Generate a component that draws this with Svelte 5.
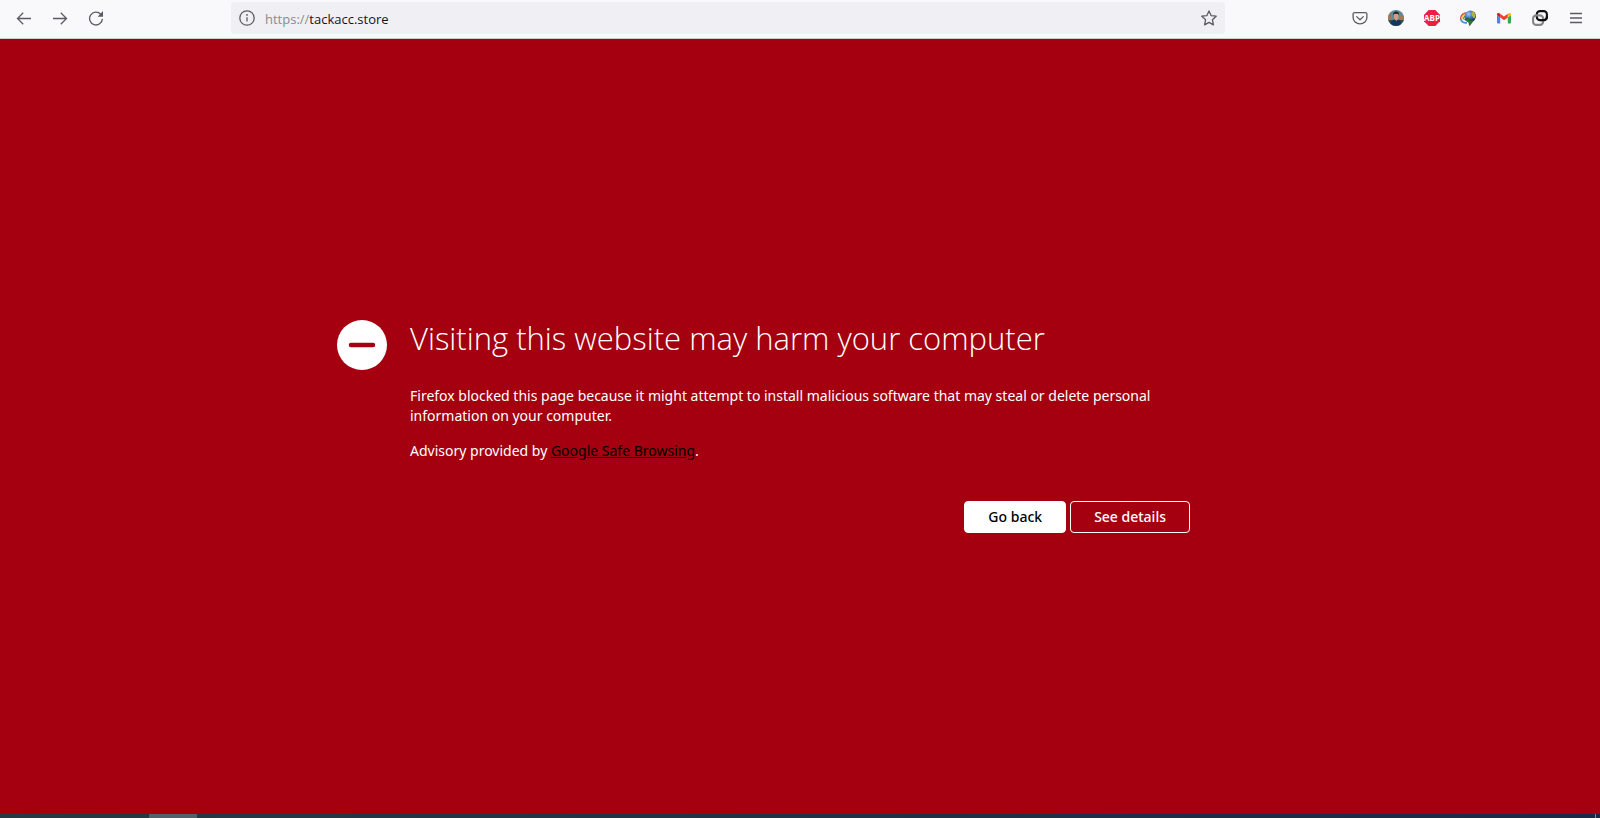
<script>
  let address = $state('https://tackacc.store');
  const scheme = $derived(address.slice(0, address.indexOf('//') + 2));
  const host = $derived(address.slice(scheme.length));
</script>

<div class="window">
  <header class="toolbar">
    <nav class="tools" aria-label="Navigation">
      <button class="tool" aria-label="Back">
        <svg viewBox="0 0 16 16" class="line"><path d="M15 8.500H1.500M7.200 2.800 1.500 8.500l5.700 5.700" /></svg>
      </button>
      <button class="tool" aria-label="Forward">
        <svg viewBox="0 0 16 16" class="line"><path d="M1 8.500h13.500M8.800 2.800l5.700 5.700-5.700 5.700" /></svg>
      </button>
      <button class="tool" aria-label="Reload">
        <svg viewBox="0 0 16 16" class="line">
          <path d="M12.700 4.200A6.400 6.400 0 1 0 14.400 8.900" />
          <path d="M15 1v5.200a.5.5 0 0 1-.5.5H9.600z" fill="#5b5b66" stroke="none" />
        </svg>
      </button>
    </nav>

    <div class="address">
      <button class="site" aria-label="Site information">
        <svg viewBox="0 0 16 16" class="line">
          <circle cx="8" cy="8" r="7.200" />
          <path d="M8 7.200v4.200" />
          <circle cx="8" cy="4.900" r=".9" fill="#5b5b66" stroke="none" />
        </svg>
      </button>
      <a class="url" href={address}><span class="scheme">{scheme}</span>{host}</a>
      <button class="site" aria-label="Bookmark this page">
        <svg viewBox="0 0 16 16" class="line">
          <path d="M8 .9l2.100 4.700 5.100.6-3.800 3.500 1 5.200L8 12.400l-4.400 2.500 1-5.200L.8 6.200l5.100-.6z" stroke-linejoin="round" />
        </svg>
      </button>
    </div>

    <nav class="tools extensions" aria-label="Extensions">
      <button class="tool" aria-label="Save to Pocket">
        <svg viewBox="0 0 16 16" class="line">
          <path d="M2.600 2.600h10.800a1.500 1.500 0 0 1 1.500 1.500v3.400a6.900 6.400 0 0 1-13.800 0V4.100a1.500 1.500 0 0 1 1.500-1.500z" />
          <path d="M4.700 6.600 8 9.700l3.300-3.100" stroke-linecap="round" stroke-linejoin="round" />
        </svg>
      </button>
      <button class="tool" aria-label="Account">
        <svg viewBox="0 0 16 16">
          <defs><clipPath id="face"><circle cx="8" cy="8" r="8" /></clipPath></defs>
          <g clip-path="url(#face)">
            <path fill="#5f8b93" d="M0 0h16v16H0z" />
            <path fill="#a27854" d="M0 4h4v6H0zM12 6h4v5h-4z" />
            <path fill="#334f55" d="M0 10h5v3H0zM11 10h5v3h-5z" />
            <path fill="#17365a" d="M2 16c0-4 2-6 4.500-6.500h3c3 .5 4 3 4 6.500z" />
            <path fill="#d79c7d" d="M6 4h4.500v4.500L8.500 11 6 8.500z" />
            <path fill="#20262b" d="M5.300 5.500c-.5-3 1-4 3-4s3.200 1.500 2.500 4l-.8-1.800-3.900.3z" />
          </g>
        </svg>
      </button>
      <button class="tool" aria-label="Adblock Plus">
        <svg viewBox="0 0 16 16">
          <path fill="#ed1e45" d="M4.700 0h6.600L16 4.700v6.600L11.300 16H4.700L0 11.300V4.700z" />
          <text x="8" y="11" text-anchor="middle" class="abp">ABP</text>
        </svg>
      </button>
      <button class="tool" aria-label="Internet Download Manager">
        <svg viewBox="0 0 16 16">
          <defs>
            <radialGradient id="globe" cx=".35" cy=".3" r=".75">
              <stop offset="0" stop-color="#a9c9f2" />
              <stop offset=".45" stop-color="#4577c4" />
              <stop offset="1" stop-color="#142c62" />
            </radialGradient>
          </defs>
          <path fill="none" stroke="#e0483b" stroke-width="1.400" d="M8 2.800C3.500 2.800.7 5.200.7 9" />
          <path fill="none" stroke="#f0cf37" stroke-width="1.400" d="M8 4.100C4.500 4.100 2 6 2 9" />
          <path fill="none" stroke="#54b649" stroke-width="1.600" d="M8 5.500C5.500 5.400 3.400 7 3.400 9.500" />
          <path fill="none" stroke="#4b8cd2" stroke-width="1.700" d="M.7 9c.4 2.600 3.100 4.100 6.300 3.800" />
          <circle cx="10.300" cy="6.300" r="5.700" fill="url(#globe)" />
          <path fill="#b5b438" d="M11.500 1.500l2 .2 2 3-.3 3-1.700.6-1.700-3z" />
          <path fill="#20882c" stroke="#0d3315" stroke-width=".5" d="M4.500 9.500 7.500 8l2.500 2.500 4-.8-4.300 6-.9-3.200z" />
        </svg>
      </button>
      <button class="tool" aria-label="Gmail">
        <svg viewBox="0 0 16 16">
          <path fill="#4285f4" d="M1 5l3.200 2.400V13.500H2a1 1 0 0 1-1-1z" />
          <path fill="#34a853" d="M11.800 7.400 15 5v7.500a1 1 0 0 1-1 1h-2.200z" />
          <path fill="#ea4335" d="M4.200 3.700 8 6.600l3.800-2.900v3.700L8 10.300 4.200 7.400z" />
          <path fill="#c5221f" d="M1 4.300C1 2.600 2.700 2.500 4.200 3.700v3.700L1 5z" />
          <path fill="#fbbc04" d="M11.800 3.700C13.300 2.500 15 2.600 15 4.300V5l-3.200 2.400z" />
        </svg>
      </button>
      <button class="tool" aria-label="Link extension">
        <svg viewBox="0 0 16 16" fill="none" stroke-width="2.100">
          <rect x="4.800" y="1.100" width="10.100" height="9" rx="3.200" stroke="#111" />
          <rect x="1.100" y="5.400" width="10" height="9.500" rx="3.200" stroke="#858589" />
          <path stroke="#111" d="M14.900 6v.9a3.200 3.200 0 0 1-3.200 3.200H8.500" />
        </svg>
      </button>
      <button class="tool" aria-label="Application menu">
        <svg viewBox="0 0 16 16" class="line"><path d="M2 3.500h12M2 8h12M2 12.500h12" /></svg>
      </button>
    </nav>
  </header>

  <main>
    <section class="warning">
      <svg class="sign" viewBox="0 0 50 50" aria-hidden="true">
        <circle cx="25" cy="25" r="25" fill="#fff" />
        <path d="M14 25h22" stroke="#a4000f" stroke-width="4.500" stroke-linecap="round" />
      </svg>
      <div class="message">
        <h1>Visiting this website may harm your computer</h1>
        <p>Firefox blocked this page because it might attempt to install malicious software that may steal or delete personal information on your computer.</p>
        <p>Advisory provided by <a href="https://safebrowsing.google.com">Google Safe Browsing</a>.</p>
        <div class="actions">
          <button class="action primary">Go back</button>
          <button class="action">See details</button>
        </div>
      </div>
    </section>
  </main>

  <footer class="taskbar"><span class="task"></span><span class="desktop"></span></footer>
</div>

<style>
  :global(body) {
    margin: 0;
  }
  .window {
    min-height: 100vh;
    display: flex;
    flex-direction: column;
    background: #a4000f;
    color: #fff;
    font: 14px/20px "Noto Sans", "Open Sans", sans-serif;
  }
  button {
    margin: 0;
    padding: 0;
    border: 0;
    background: none;
    color: inherit;
    font: inherit;
  }
  .toolbar {
    display: grid;
    grid-template-columns: auto 117fr 994fr 117fr auto;
    align-items: center;
    padding: 2px 6px 4px;
    background: #f9f9fb;
    border-bottom: 1px solid #c8cfcb;
  }
  .tools {
    display: flex;
  }
  .extensions {
    grid-column: 5;
  }
  .tool {
    display: grid;
    place-items: center;
    width: 36px;
    height: 32px;
  }
  .tool svg,
  .site svg {
    display: block;
    width: 16px;
    height: 16px;
  }
  .line {
    fill: none;
    stroke: #5b5b66;
    stroke-width: 1.3;
  }
  .abp {
    fill: #fff;
    font: 700 8px "Open Sans", sans-serif;
  }
  .address {
    grid-column: 3;
    display: flex;
    align-items: center;
    height: 32px;
    border-radius: 4px;
    background: #f0f0f4;
  }
  .site {
    display: grid;
    place-items: center;
    width: 32px;
    height: 32px;
  }
  .url {
    flex: 1;
    padding: 2px 0 0 2px;
    color: #15141a;
    font-family: "Open Sans", sans-serif;
    font-size: 13px;
    text-decoration: none;
  }
  .scheme {
    color: #8a8a90;
  }
  main {
    flex: 1;
    display: grid;
    align-items: center;
    justify-items: center;
  }
  .warning {
    box-sizing: border-box;
    display: flex;
    gap: 23px;
    width: 100%;
    max-width: 926px;
    padding-right: 73px;
  }
  .sign {
    flex: none;
    width: 50px;
    height: 50px;
  }
  .message {
    flex: 1;
  }
  h1 {
    margin: 0 0 30px;
    font-family: "Open Sans", sans-serif;
    font-size: 31px;
    line-height: 36px;
    font-weight: 300;
  }
  p {
    margin: 0 0 15px;
  }
  p a {
    color: #000;
  }
  .actions {
    display: flex;
    justify-content: flex-end;
    gap: 4px;
    margin-top: 40px;
  }
  .action {
    box-sizing: border-box;
    height: 32px;
    padding: 0 23px;
    border: 1px solid #fff;
    border-radius: 4px;
    font-weight: 500;
  }
  .primary {
    background: #fff;
    color: #000;
  }
  .taskbar {
    display: flex;
    height: 4px;
    background: linear-gradient(90deg, #263a42, #1c2945);
  }
  .task {
    width: 48px;
    margin-left: 149px;
    background: #526169;
  }
  .desktop {
    width: 1px;
    margin: 0 4px 0 auto;
    background: #7d8698;
  }
</style>
